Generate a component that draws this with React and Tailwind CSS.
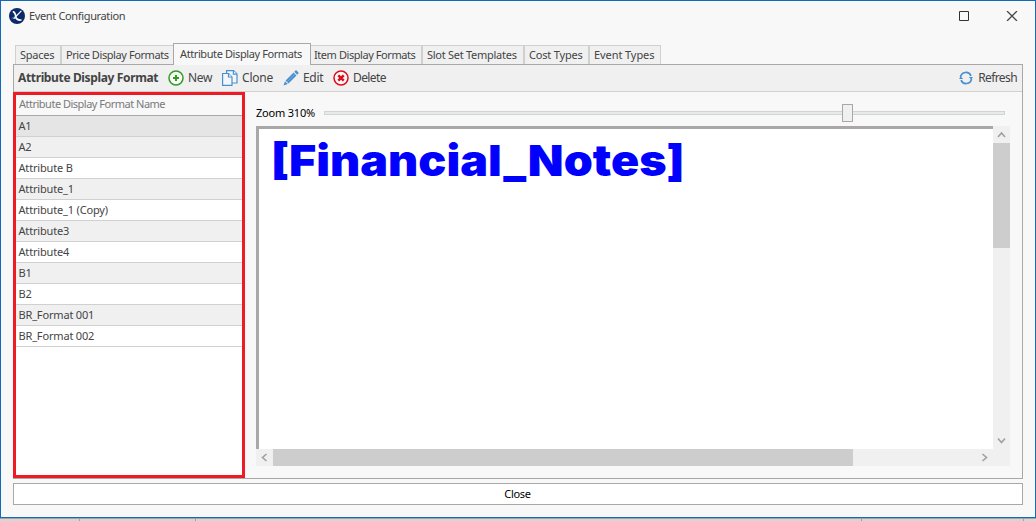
const tabs = [
  { label: 'Spaces', box: 'w-[46px] h-[19px] border-r pl-[4px] tracking-[-0.25px]' },
  { label: 'Price Display Formats', box: 'w-[112px] h-[19px] border-l pl-[4px] tracking-[-0.42px]' },
  { label: 'Attribute Display Formats', active: true, box: 'w-[138px] pl-[6px] tracking-[-0.4px]' },
  { label: 'Item Display Formats', box: 'w-[111px] h-[19px] border-r pl-[3px] tracking-[-0.43px]' },
  { label: 'Slot Set Templates', box: 'w-[102px] h-[19px] border-x pl-[4px] tracking-[-0.27px]' },
  { label: 'Cost Types', box: 'w-[65px] h-[19px] border-x pl-[4px] tracking-[-0.18px]' },
  { label: 'Event Types', box: 'w-[72px] h-[19px] border-x pl-[4px] tracking-[-0.08px]' },
];

const rows = [
  { name: 'A1', tone: 'bg-[#e5e5e5]' },
  { name: 'A2', tone: 'bg-[#f0f0f0]' },
  { name: 'Attribute B', tone: 'bg-white' },
  { name: 'Attribute_1', tone: 'bg-[#f0f0f0]' },
  { name: 'Attribute_1 (Copy)', tone: 'bg-white' },
  { name: 'Attribute3', tone: 'bg-[#f0f0f0]' },
  { name: 'Attribute4', tone: 'bg-white' },
  { name: 'B1', tone: 'bg-[#f0f0f0]' },
  { name: 'B2', tone: 'bg-white' },
  { name: 'BR_Format 001', tone: 'bg-[#f0f0f0]' },
  { name: 'BR_Format 002', tone: 'bg-white' },
];

function Logo() {
  return (
    <svg width="16" height="16" viewBox="0 0 16 16" className="shrink-0">
      <circle cx="8" cy="8" r="8" fill="#0c2a68" />
      <path d="M2.500 10.500C5 9 8.500 7 12.500 2.800" fill="none" stroke="#5b86c8" strokeWidth="0.8" />
      <path d="M3.800 3.600c2.200 0 2.400 3 3.400 5.200" fill="none" stroke="#fff" strokeWidth="1.700" />
      <path d="M12.300 2.800 4.600 10.800" fill="none" stroke="#fff" strokeWidth="1.200" />
      <path d="M6.500 9.200c1.500 2.400 3.500 3.300 6 2.600" fill="none" stroke="#fff" strokeWidth="1.700" />
    </svg>
  );
}

function NewIcon() {
  return (
    <svg width="16" height="16" viewBox="0 0 16 16" className="shrink-0">
      <circle cx="8" cy="8" r="7" fill="#fff" fillOpacity="0.5" stroke="#2f9e20" strokeWidth="1.500" />
      <path d="M8 5v6M5 8h6" stroke="#2f9e20" strokeWidth="2" />
    </svg>
  );
}

function CloneIcon() {
  return (
    <svg width="16" height="16" viewBox="0 0 16 16" className="shrink-0" fill="#f4f7fa" stroke="#4a90d0" strokeWidth="1.200">
      <path d="M4.600 3V.6h7L15 4v9h-5" />
      <path d="M11.400.6V4.200H15" />
      <path d="M.6 3.500h6L10 7v8.400H.6z" />
      <path d="M6.500 3.500V7H10" />
    </svg>
  );
}

function EditIcon() {
  return (
    <svg width="16" height="16" viewBox="0 0 16 16" className="shrink-0" fill="#4a90d0">
      <path d="M.5 15.500 2 11.200 4.800 14z" />
      <path d="M2.600 10.500 10.600 2.500 13.500 5.400 5.500 13.400z" />
      <path d="M11.300 1.800 12.500.6q.6-.5 1.100 0l1.800 1.800q.5.600 0 1.100L14.200 4.700z" />
      <path d="M4.200 11.800 12 4" stroke="#8dbbe2" strokeWidth="0.6" />
    </svg>
  );
}

function DeleteIcon() {
  return (
    <svg width="16" height="16" viewBox="0 0 16 16" className="shrink-0">
      <circle cx="8" cy="8" r="7" fill="#fff" fillOpacity="0.5" stroke="#e00b18" strokeWidth="1.500" />
      <path d="m5.300 5.300 5.400 5.400M10.700 5.300l-5.400 5.400" stroke="#e00b18" strokeWidth="2.500" />
    </svg>
  );
}

function RefreshIcon() {
  return (
    <svg width="14" height="14" viewBox="0 0 14 14" className="shrink-0">
      <path d="M1.500 6.200A5.500 5.500 0 0 1 12 4.800M12.500 7.800A5.500 5.500 0 0 1 2 9.200" fill="none" stroke="#4a90d0" strokeWidth="1.700" />
      <path d="M9.800 6H14L12.300 8.500zM4.200 8H0L1.700 5.500z" fill="#4a90d0" />
    </svg>
  );
}

function Chevron({ d }) {
  return (
    <svg width="17" height="17" viewBox="0 0 17 17" className="shrink-0">
      <path d={d} fill="none" stroke="#a0a0a0" strokeWidth="1.600" />
    </svg>
  );
}

export default function App() {
  return (
    <div className="h-[521px] w-[1036px] overflow-hidden bg-[#d6d6d6] font-['Noto_Sans',sans-serif] text-[11px] text-[#444]">
      <div className="flex h-[518px] flex-col border border-[#1469b8] bg-[#f8f8f8] px-3">
        <div className="flex h-[42px] shrink-0 items-start justify-between">
          <div className="-ml-[4px] flex items-center gap-1 pt-[7px]">
            <Logo />
            <span className="leading-[16px] tracking-[-0.35px]">Event Configuration</span>
          </div>
          <div className="flex gap-[37px] pt-[10px] pr-[5px]">
            <svg width="10" height="10" viewBox="0 0 10 10">
              <path d="M.5.5h9v9h-9z" fill="none" stroke="#333" />
            </svg>
            <svg width="12" height="10" viewBox="0 0 12 10">
              <path d="m1 0 10 10M11 0 1 10" stroke="#444" strokeWidth="1.300" />
            </svg>
          </div>
        </div>

        <div className="flex h-[21px] shrink-0 items-end pl-[2px]">
          {tabs.map((t) =>
            t.active ? (
              <div key={t.label} className={`${t.box} z-10 -mb-px h-[22px] border border-b-0 border-[#a8a8a8] bg-[#f8f8f8] leading-[19px] whitespace-nowrap`}>
                {t.label}
              </div>
            ) : (
              <div key={t.label} className={`${t.box} border-t border-[#d0d0d0] bg-[#f0f0f0] leading-[17px] whitespace-nowrap first:border-l`}>
                {t.label}
              </div>
            ),
          )}
        </div>

        <div className="flex h-[415px] shrink-0 flex-col border border-[#a8a8a8]">
          <div className="flex h-[27px] shrink-0 items-center border-b border-[#d0d0d0] bg-[#f0f0f0] pl-1 text-[12px] whitespace-nowrap">
            <b className="w-[150px] tracking-[-0.36px]">Attribute Display Format</b>
            <div className="flex w-[54px] items-center gap-[4px]">
              <NewIcon />
              <span className="tracking-[-0.3px]">New</span>
            </div>
            <div className="flex w-[61px] items-center gap-[4px]">
              <CloneIcon />
              <span className="tracking-[-0.2px]">Clone</span>
            </div>
            <div className="flex w-[50px] items-center gap-[4px]">
              <EditIcon />
              <span className="tracking-[-0.3px]">Edit</span>
            </div>
            <div className="flex items-center gap-[4px]">
              <DeleteIcon />
              <span className="tracking-[-0.6px]">Delete</span>
            </div>
            <div className="ml-auto flex items-center gap-[5px] pr-[5px]">
              <RefreshIcon />
              <span className="tracking-[-0.6px]">Refresh</span>
            </div>
          </div>

          <div className="flex min-h-0 flex-1">
            <div className="-ml-px h-[386px] w-[232px] shrink-0 border-[3px] border-[#ed1c24] bg-white">
              <div className="h-[21px] border-b border-[#a8a8a8] bg-[#f8f8f8] pl-[3px] leading-[17px] tracking-[-0.5px] text-[#7a7a7a]">
                Attribute Display Format Name
              </div>
              {rows.map((r) => (
                <div key={r.name} className={`${r.tone} h-[21px] border-b border-[#d0d0d0] pl-[2.5px] leading-[20px] tracking-[-0.17px]`}>
                  {r.name}
                </div>
              ))}
            </div>

            <div className="flex min-w-0 flex-1 flex-col pr-[12px] pl-[11px]">
              <div className="flex h-[34px] shrink-0 items-center pt-[8px]">
                <span className="w-[68px] tracking-[-0.2px] text-black">Zoom 310%</span>
                <div className="mr-[5px] flex h-[18px] flex-1 items-center">
                  <div className="h-[4px] w-[518px] border border-r-0 border-[#d0d4d4] bg-[#e6eaea]" />
                  <div className="h-[18px] w-[11px] border border-[#a8a8a8] bg-[#f0f0f0]" />
                  <div className="h-[4px] flex-1 border border-l-0 border-[#d0d4d4] bg-[#e6eaea]" />
                </div>
              </div>
              <div className="flex h-[323px] shrink-0">
                <div className="min-w-0 flex-1 overflow-hidden border-t-[3px] border-l-[3px] border-[#a8a8a8] bg-white pl-[12px]">
                  <span className="inline-block origin-left scale-x-[1.083] pt-[5px] font-['Inter',sans-serif] text-[43px] leading-[52px] font-black text-[#0000ff]">
                    [Financial_Notes]
                  </span>
                </div>
                <div className="flex w-[17px] shrink-0 flex-col bg-[#f0f0f0]">
                  <Chevron d="m5 11 3.500-4L12 11" />
                  <div className="h-[105px] bg-[#cdcdcd]" />
                  <div className="mt-auto h-[17px]">
                    <Chevron d="m5 6.500 3.500 4 3.500-4" />
                  </div>
                </div>
              </div>
              <div className="flex h-[17px] shrink-0 bg-[#f0f0f0] pr-[17px]">
                <Chevron d="m10.500 5-4 3.500 4 3.500" />
                <div className="w-[580px] bg-[#cdcdcd]" />
                <div className="ml-auto">
                  <Chevron d="m6.500 5 4 3.500-4 3.500" />
                </div>
              </div>
            </div>
          </div>
        </div>

        <button className="mt-[4px] h-[22px] shrink-0 border border-[#a8a8a8] bg-white pr-px pb-px text-center leading-[19px] tracking-[-0.3px] text-black">
          Close
        </button>
      </div>
      <div className="flex h-[3px] border-t border-[#a0a4a8]">
        <div className="w-[80px] border-r border-[#a0a0a0]" />
        <div className="w-[116px] border-r border-[#a0a0a0]" />
        <div className="w-[666px] border-r border-[#a0a0a0]" />
        <div className="w-[162px] border-r border-[#a0a0a0]" />
      </div>
    </div>
  );
}
